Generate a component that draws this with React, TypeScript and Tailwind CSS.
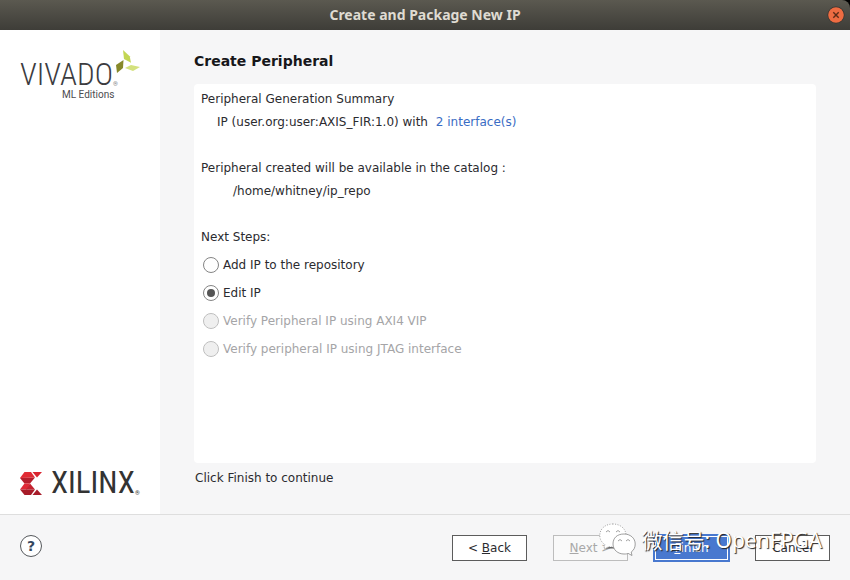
import { useState } from "react";

const steps = [
  { id: "add", label: "Add IP to the repository", disabled: false },
  { id: "edit", label: "Edit IP", disabled: false },
  { id: "axi", label: "Verify Peripheral IP using AXI4 VIP", disabled: true },
  { id: "jtag", label: "Verify peripheral IP using JTAG interface", disabled: true },
];

function TitleBar() {
  return (
    <div className="bg-black">
      <header className="grid h-[30px] grid-cols-[1fr_auto_1fr] items-center rounded-tr-lg bg-linear-to-b from-[#5b5950] to-[#3e3d38] px-[5px]">
        <span />
        <h1 className="font-['Noto_Sans',sans-serif] text-sm font-bold text-[#dfdbd2]">
          Create and Package New IP
        </h1>
        <button type="button" aria-label="Close" className="justify-self-end">
          <svg width="18" height="18" viewBox="0 0 18 18">
            <circle cx="9" cy="9" r="8.5" fill="#34332f" />
            <circle cx="9" cy="9" r="7.8" fill="#ee6c42" />
            <path d="M6.3 6.3l5.4 5.4M11.7 6.3l-5.4 5.4" stroke="#5c2c18" strokeWidth="1.4" />
          </svg>
        </button>
      </header>
    </div>
  );
}

function VivadoLogo() {
  return (
    <div className="relative w-[120px] font-[Roboto,sans-serif]">
      <div className="flex items-end font-['Roboto_Condensed',Roboto,sans-serif] text-[31px] leading-7 font-light text-[#3c3c3f]">
        VIVADO<span className="text-[6px] leading-[10px]">®</span>
      </div>
      <div className="pl-[42px] text-[10px] leading-3 text-[#4c4c4f]">ML Editions</div>
      <svg className="absolute -top-[11px] left-[95px]" width="25" height="24" viewBox="0 0 25 24">
        <path d="M8 0L14.7 6.3L16 12.7L9 9Z" fill="#c3d653" />
        <path d="M1 15L8.500 10L8 18L2 23Z" fill="#87892a" />
        <path d="M10 18L16 15L25 17L18 21Z" fill="#d4e17d" />
      </svg>
    </div>
  );
}

function XilinxLogo() {
  return (
    <div className="flex items-center gap-[9px]">
      <svg width="22" height="23" viewBox="0 0 22 23">
        <path d="M4.500 0H11L15 5.500L0 6Z" fill="#e12b34" />
        <path d="M0 6L15 5.500L10 11.500H4.500Z" fill="#b51f2c" />
        <path d="M4.500 11.500H10L7 17.500H0Z" fill="#df2935" />
        <path d="M10 11.500L15 17.500H6Z" fill="#c4222f" />
        <path d="M0 17.500H15L11 23H4.500Z" fill="#a71c29" />
        <path d="M12.500 0H22L17 5.500Z" fill="#d9252f" />
        <path d="M12.500 23H22L17 17.500Z" fill="#a71c29" />
      </svg>
      <div className="flex items-end font-['Roboto_Condensed',Roboto,sans-serif] text-[31px] leading-[30px] text-[#333333]">
        XILINX<span className="text-[6px] leading-[10px]">®</span>
      </div>
    </div>
  );
}

function Watermark() {
  return (
    <div className="pointer-events-none absolute top-2 right-7 flex items-center gap-1">
      <svg width="38" height="34" viewBox="0 0 38 34" fill="#fff" stroke="#777" strokeWidth="0.7">
        <path d="M5 26L12 23.500L17 25.500L10 25.500Z" fill="#666" stroke="none" />
        <path d="M14 1C6 1 .8 6 .8 12.500c0 4 2 7 5 9L5 26l5-2.500c7 2 17-1 17-11C27 5.500 21 1 14 1Z" strokeDasharray="1 1.500" />
        <path d="M25 11c-7 0-11 4-11 10s5 10 11 10c2 0 3 0 4-.7l4 2.200-.8-3.500c3-2 4-5 4-8 0-6-5-10-11.200-10Z" />
        <path d="M7 9q2-3 4 0M17 9q2-3 4 0M19 18q2-3 4 0M27 18q2-3 4 0" fill="none" />
      </svg>
      <span className="font-['Noto_Sans','Noto_Sans_CJK_SC',sans-serif] text-[21px] leading-8 whitespace-nowrap text-white [text-shadow:1px_1px_1px_#222]">
        微信号: OpenFPGA
      </span>
    </div>
  );
}

export default function App() {
  const [selected, setSelected] = useState("edit");
  const button = "h-[26px] w-[75px] border text-xs leading-4";
  return (
    <div className="flex min-h-screen flex-col bg-[#f6f6f7] font-['DejaVu_Sans',sans-serif] text-xs leading-[23px] text-[#2b2b2f]">
      <TitleBar />
      <div className="flex flex-1">
        <aside className="flex w-40 shrink-0 flex-col justify-between bg-white pt-[31px] pb-4 pl-5">
          <VivadoLogo />
          <XilinxLogo />
        </aside>
        <main className="flex flex-1 flex-col px-[34px] pt-5 pb-6">
          <h2 className="mb-3 text-sm leading-[22px] font-bold text-[#17171a]">Create Peripheral</h2>
          <section className="flex-1 rounded-sm bg-white px-[7px] pt-1">
            <p>Peripheral Generation Summary</p>
            <p className="pl-4">
              IP (user.org:user:AXIS_FIR:1.0) with{" "}
              <a href="#interfaces" className="ml-1 text-[#3a6cc4]">2 interface(s)</a>
            </p>
            <p className="mt-[23px]">Peripheral created will be available in the catalog :</p>
            <p className="pl-8">/home/whitney/ip_repo</p>
            <fieldset className="mt-[23px]">
              <legend className="mb-[2px]">Next Steps:</legend>
              {steps.map((step) => (
                <label key={step.id} className="flex h-7 items-center gap-1 pl-[2px] has-disabled:text-[#a5a5a7]">
                  <input
                    type="radio"
                    name="next-step"
                    checked={selected === step.id}
                    disabled={step.disabled}
                    onChange={() => setSelected(step.id)}
                    className="size-4 appearance-none rounded-full border border-[#858585] bg-white bg-clip-padding p-[3px] checked:bg-[#555] checked:bg-clip-content disabled:border-[#bdbdbd] disabled:bg-[#efefef]"
                  />
                  {step.label}
                </label>
              ))}
            </fieldset>
          </section>
          <p className="mt-1 pl-px">Click Finish to continue</p>
        </main>
      </div>
      <footer className="relative flex h-[66px] items-center justify-between border-t border-[#dedede] px-5">
        <button
          type="button"
          aria-label="Help"
          className="mb-1 size-[22px] rounded-full border border-[#55585c] bg-white text-sm leading-5 font-bold text-[#34475e]"
        >
          ?
        </button>
        <div className="flex items-center gap-[26px]">
          <button type="button" className={`${button} border-[#5c5c5c] bg-white`}>
            &lt; <u>B</u>ack
          </button>
          <button type="button" disabled className={`${button} border-[#bdbdbd] bg-[#f9f9f9] text-[#a8a8a8]`}>
            <u>N</u>ext &gt;
          </button>
          <button
            type="button"
            className="-mx-px h-7 w-[77px] border-2 border-[#4878cf] bg-[#4878cf] text-xs leading-4 text-white inset-ring inset-ring-white"
          >
            <u>F</u>inish
          </button>
          <button type="button" className={`${button} border-[#5c5c5c] bg-white`}>
            Cancel
          </button>
        </div>
        <Watermark />
      </footer>
    </div>
  );
}
